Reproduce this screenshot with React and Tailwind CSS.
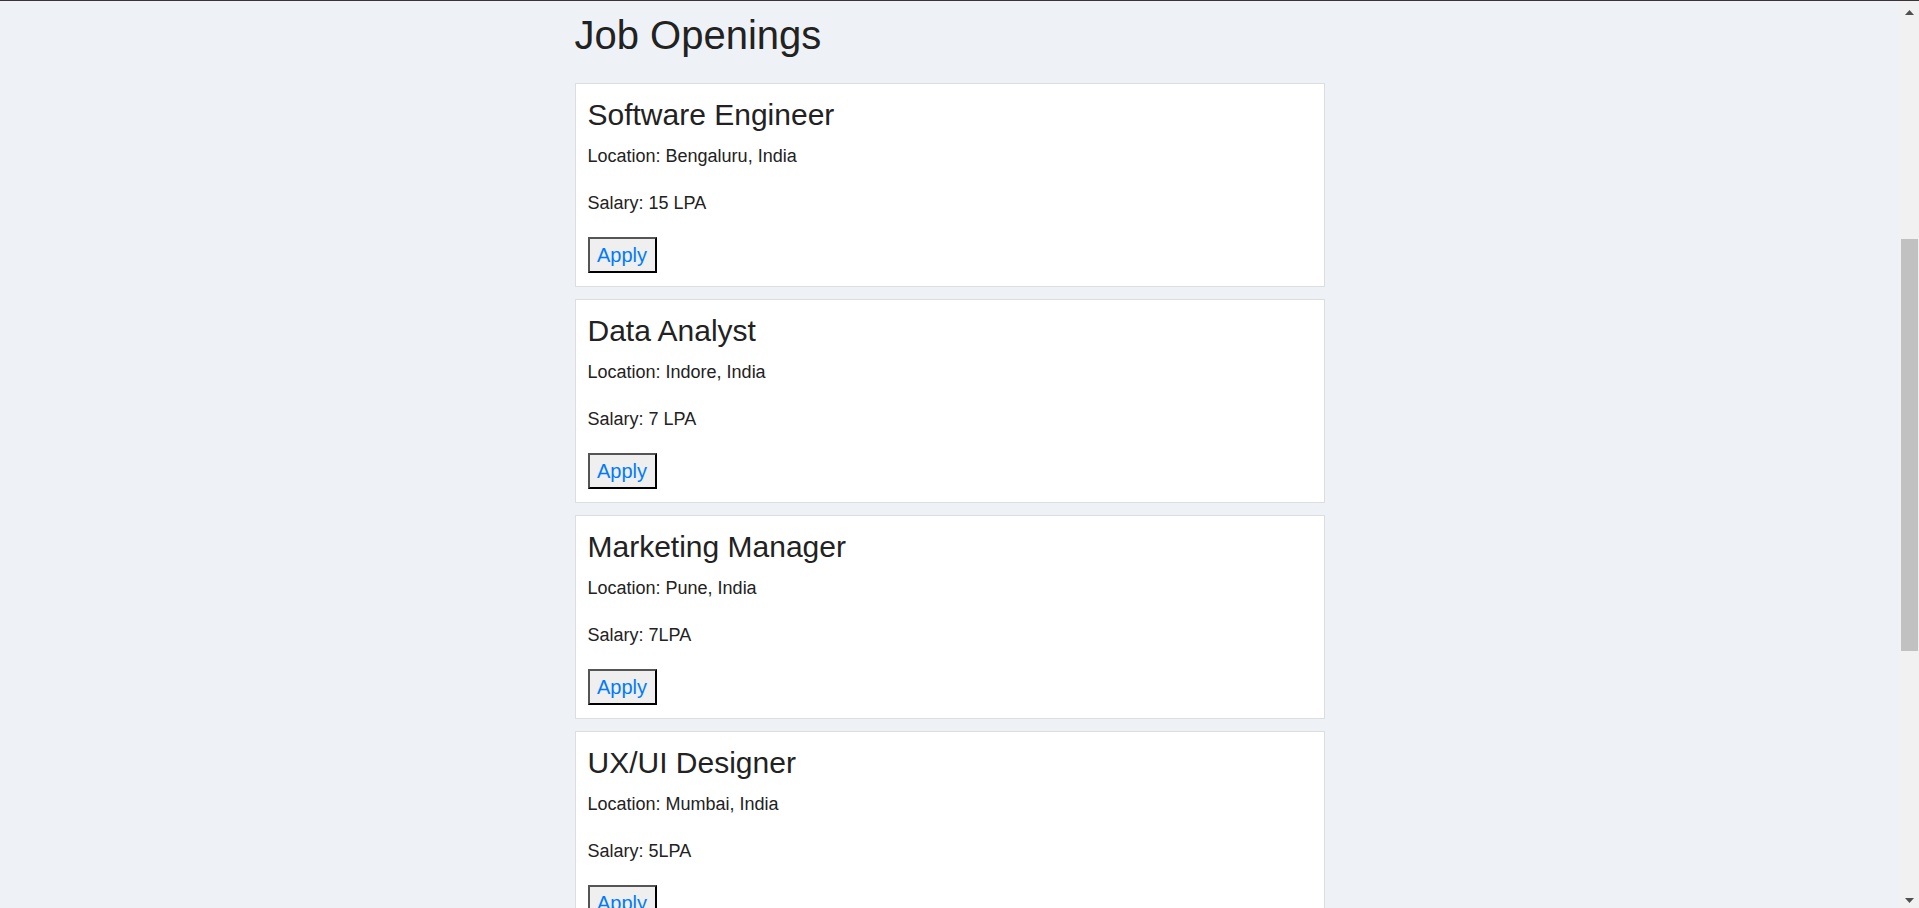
// App.jsx
import React from 'react';

const jobs = [
    { id: 1, title: 'Software Engineer', location: 'Bengaluru, India', salary: '15 LPA' },
    { id: 2, title: 'Data Analyst', location: 'Indore, India', salary: '7 LPA' },
    { id: 3, title: 'Marketing Manager', location: 'Pune, India', salary: '7LPA' },
    { id: 4, title: 'UX/UI Designer', location: 'Mumbai, India', salary: '5LPA' },
];

const JobCard = ({ job }) => (
    <div className="bg-white border border-[#dddddd] px-[12px] pt-[14px] pb-[13px] mb-[12px] h-[204px] shrink-0">
        <h2 className="text-[30px] leading-[34px] text-[#222222] m-0">{job.title}</h2>
        <p className="text-[18px] leading-[23px] text-[#222222] mt-[13px]">Location: {job.location}</p>
        <p className="text-[18px] leading-[23px] text-[#222222] mt-[24px]">Salary: {job.salary}</p>
        <button
            type="button"
            className="mt-[22px] w-[69px] h-[36px] flex items-center justify-center bg-[#efefef] border-2 border-t-[#555555] border-l-[#555555] border-b-black border-r-black text-[20px] leading-[23px] text-[#007bff]"
        >
            Apply
        </button>
    </div>
);

const App = () => {
    return (
        <div className="h-screen flex flex-col overflow-hidden font-['Liberation_Sans',Arial,sans-serif]">
            {/* top edge */}
            <div className="h-px bg-[#3b3338] shrink-0"></div>

            <div className="flex flex-1 min-h-0">
                <main className="flex-1 bg-[#eef2f7] overflow-hidden">
                    <div className="w-[750px] mx-auto flex flex-col">
                        <h1 className="text-[40px] leading-[46px] text-[#222222] mt-[11px] mb-[25px]">
                            Job Openings
                        </h1>
                        {jobs.map((job) => (
                            <JobCard key={job.id} job={job} />
                        ))}
                    </div>
                </main>

                {/* scrollbar */}
                <div className="w-[20px] bg-[#f1f1f1] flex flex-col shrink-0">
                    <svg width="9" height="5" viewBox="0 0 9 5" className="mt-[9px] ml-[6px]">
                        <path d="M4.5 0 L9 5 L0 5 Z" fill="#505050" />
                    </svg>
                    <div className="mt-[224px] ml-[2px] w-[17px] h-[412px] bg-[#c1c1c1]"></div>
                    <div className="flex-1"></div>
                    <svg width="9" height="5" viewBox="0 0 9 5" className="mb-[5px] ml-[6px]">
                        <path d="M0 0 L9 0 L4.5 5 Z" fill="#505050" />
                    </svg>
                </div>
            </div>
        </div>
    );
};

export default App;
